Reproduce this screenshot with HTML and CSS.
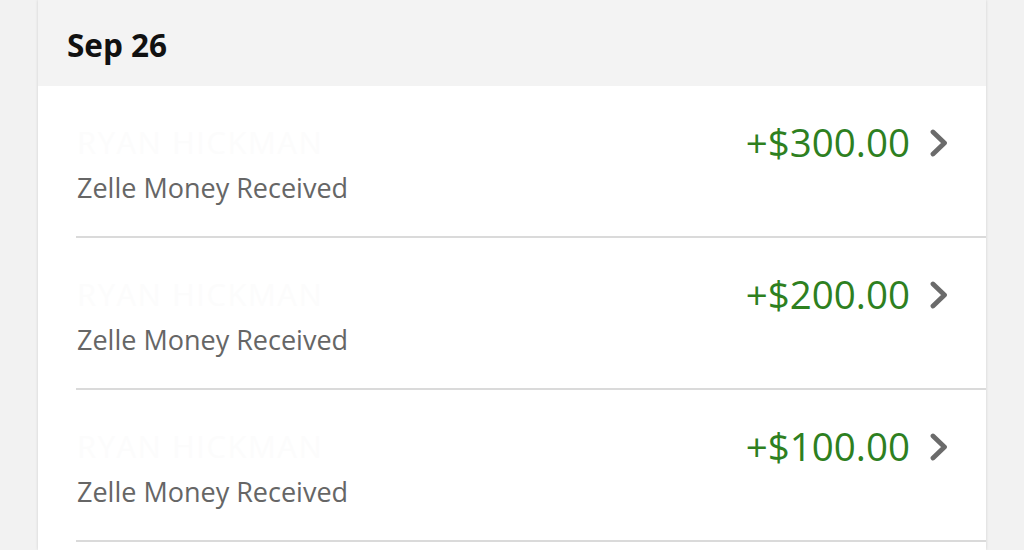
FILE: index.html
```html
<!DOCTYPE html>
<html lang="en">
<head>
<meta charset="utf-8">
<title>Activity</title>
<link rel="stylesheet" href="styles.css">
</head>
<body>
<main class="card">
  <header class="date-head">Sep 26</header>
  <ul class="txn-list">
    <li class="txn">
      <div class="txn-info">
        <div class="txn-name">RYAN HICKMAN</div>
        <div class="txn-type">Zelle Money Received</div>
      </div>
      <div class="txn-amount-wrap">
        <span class="txn-amount">+$300.00</span>
        <svg class="chev" viewBox="0 0 18 28" width="18" height="28" aria-hidden="true"><path d="M3 3 L14.5 14 L3 25" fill="none" stroke="#6b6b6b" stroke-width="4.8" stroke-linecap="round" stroke-linejoin="round"/></svg>
      </div>
    </li>
    <li class="txn">
      <div class="txn-info">
        <div class="txn-name">RYAN HICKMAN</div>
        <div class="txn-type">Zelle Money Received</div>
      </div>
      <div class="txn-amount-wrap">
        <span class="txn-amount">+$200.00</span>
        <svg class="chev" viewBox="0 0 18 28" width="18" height="28" aria-hidden="true"><path d="M3 3 L14.5 14 L3 25" fill="none" stroke="#6b6b6b" stroke-width="4.8" stroke-linecap="round" stroke-linejoin="round"/></svg>
      </div>
    </li>
    <li class="txn">
      <div class="txn-info">
        <div class="txn-name">RYAN HICKMAN</div>
        <div class="txn-type">Zelle Money Received</div>
      </div>
      <div class="txn-amount-wrap">
        <span class="txn-amount">+$100.00</span>
        <svg class="chev" viewBox="0 0 18 28" width="18" height="28" aria-hidden="true"><path d="M3 3 L14.5 14 L3 25" fill="none" stroke="#6b6b6b" stroke-width="4.8" stroke-linecap="round" stroke-linejoin="round"/></svg>
      </div>
    </li>
  </ul>
</main>
</body>
</html>
```
FILE: styles.css
```css
html, body {
  margin: 0;
  padding: 0;
  height: 100%;
  overflow: hidden;
}
body {
  background: #f2f2f2;
  font-family: "Open Sans", "Noto Sans", sans-serif;
}
.card {
  margin: 0 38px;
  background: #ffffff;
  box-shadow: 0 0 3px rgba(0, 0, 0, 0.14);
  min-height: 100%;
}
.date-head {
  height: 86px;
  box-sizing: border-box;
  background: #f3f3f3;
  padding: 24px 0 0 29px;
  font-size: 31.5px;
  line-height: 42px;
  font-weight: 700;
  color: #111;
}
.txn-list {
  list-style: none;
  margin: 0;
  padding: 0;
}
.txn {
  margin-left: 38px;
  height: 152px;
  box-sizing: border-box;
  border-bottom: 2px solid #dadada;
  display: flex;
  justify-content: space-between;
  align-items: flex-start;
  padding: 36px 38px 0 1px;
}
.txn-name {
  font-size: 31px;
  line-height: 40px;
  color: #fcfcfc;
  letter-spacing: 1.5px;
}
.txn-type {
  font-size: 27px;
  line-height: 34px;
  margin-top: 9px;
  color: #666666;
}
.txn-amount-wrap {
  display: flex;
  align-items: center;
  gap: 20px;
  height: 40px;
}
.txn-amount {
  font-size: 38.5px;
  line-height: 40px;
  color: #2e801f;
}
.chev {
  display: block;
  margin-top: 2px;
}
```
